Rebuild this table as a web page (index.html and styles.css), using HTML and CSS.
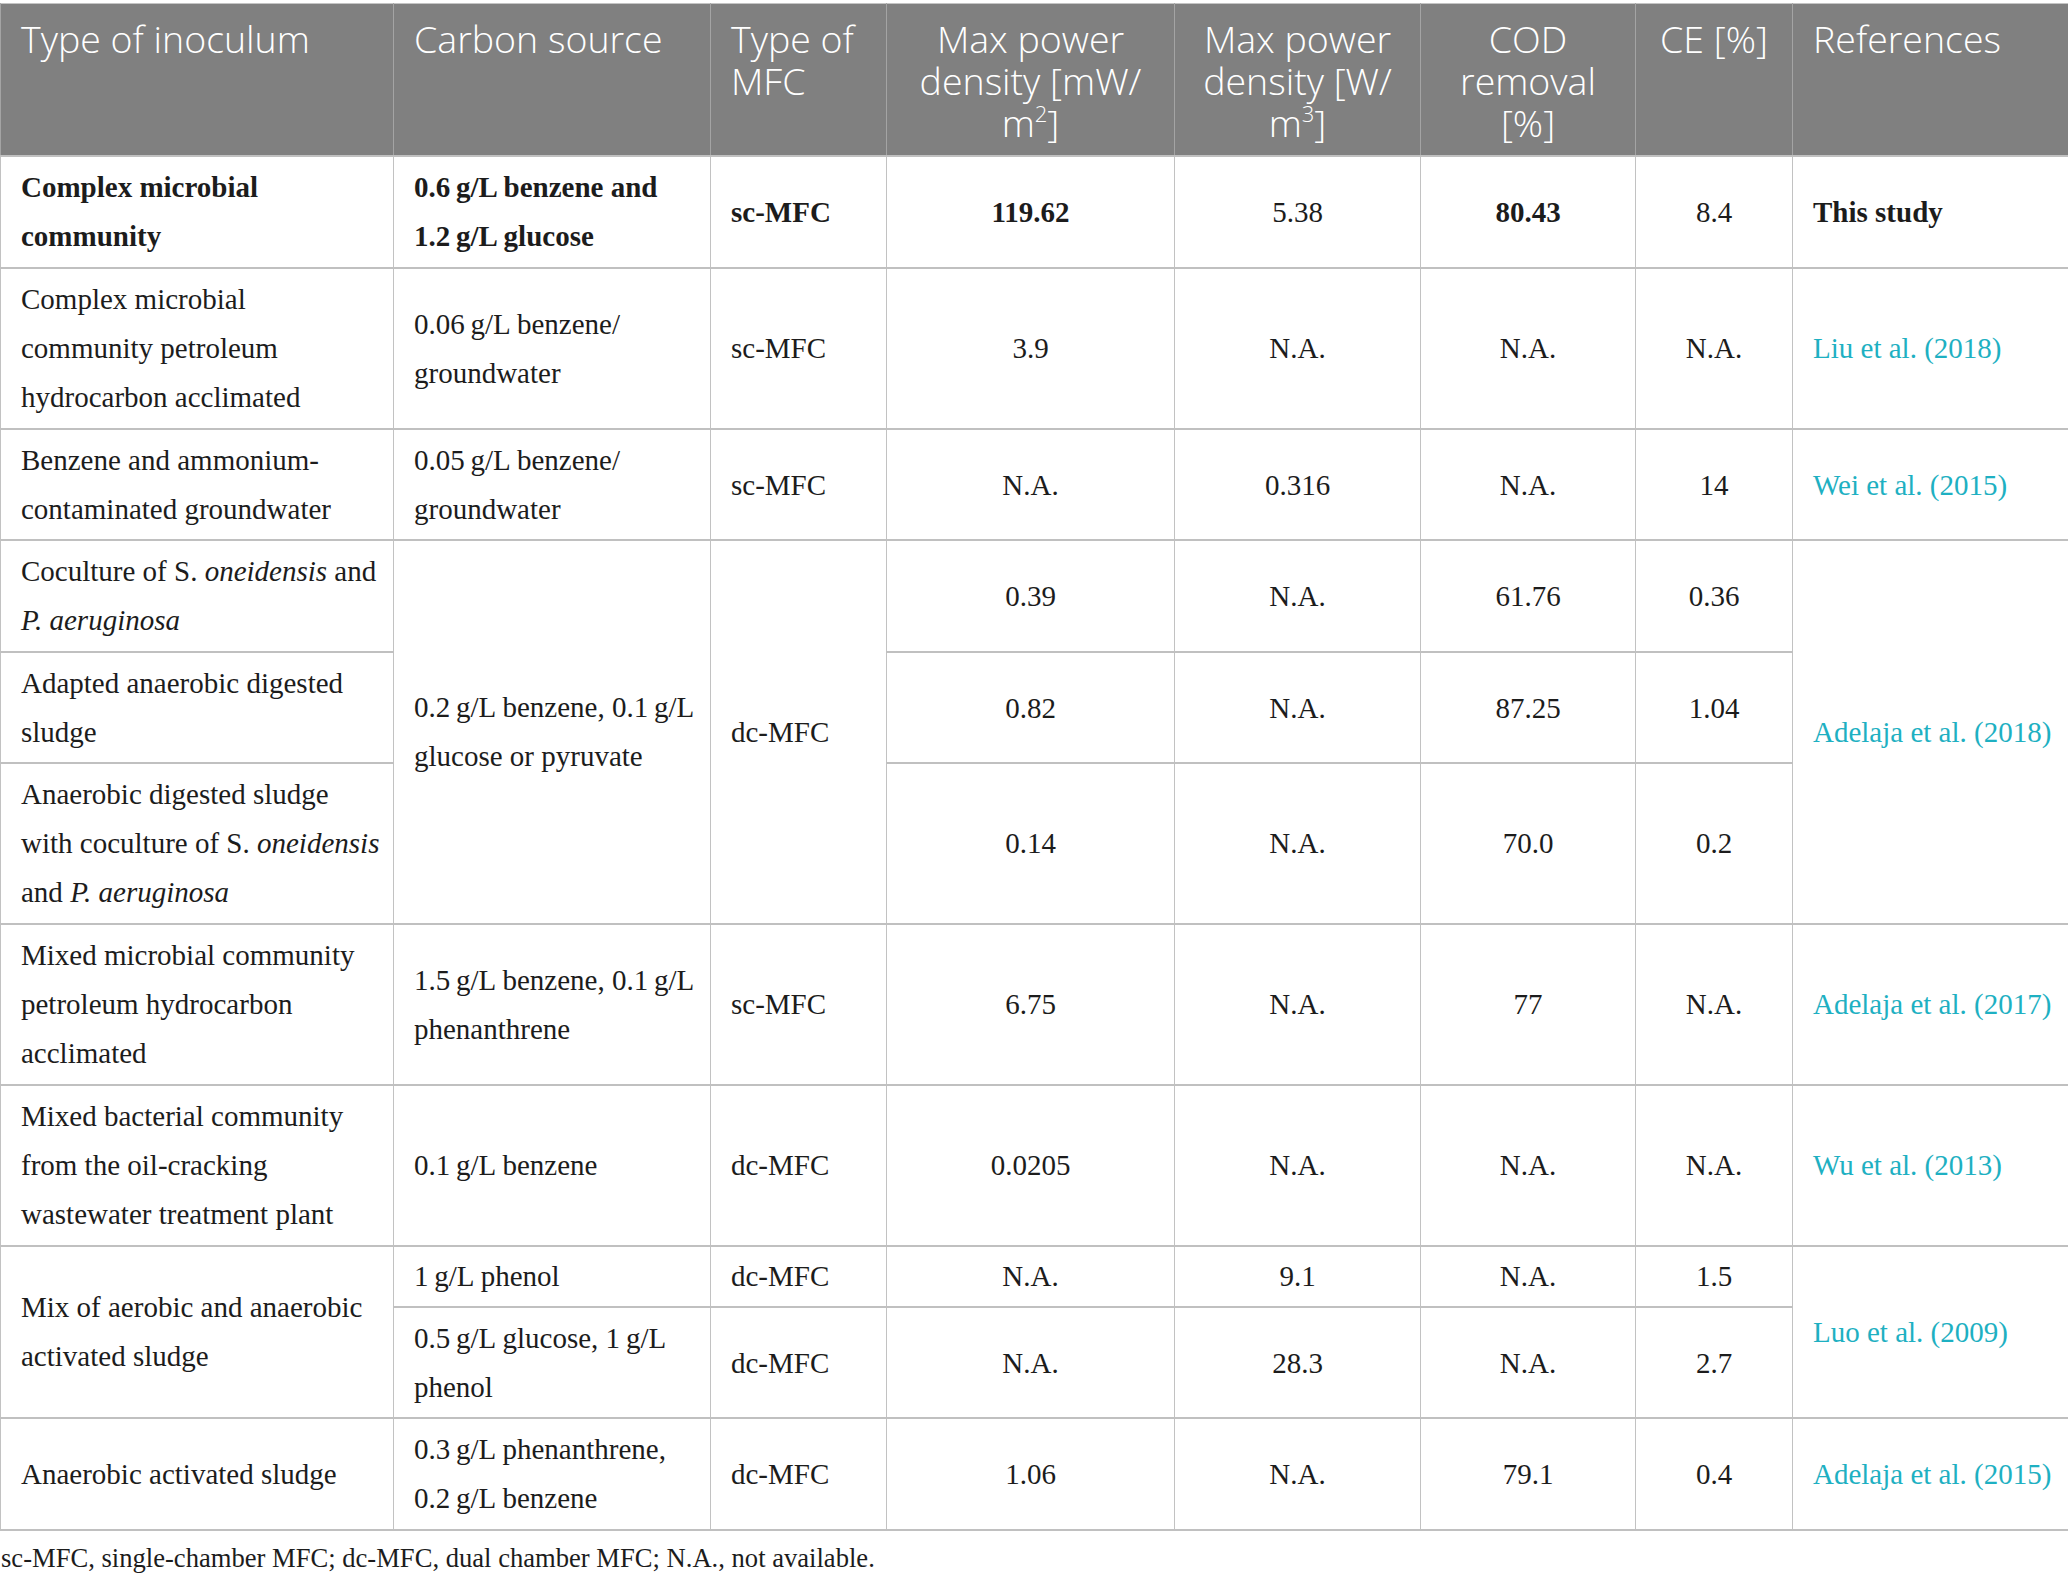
FILE: index.html
```html
<!DOCTYPE html>
<html lang="en">
<head>
  <meta charset="UTF-8" />
  <title>MFC performance comparison</title>
  <link rel="stylesheet" href="styles.css">
</head>
<body>

  <div class="page">
    <table class="mfc-table">
      <colgroup>
        <col class="col-inoc">
        <col class="col-carbon">
        <col class="col-type">
        <col class="col-pd2">
        <col class="col-pd3">
        <col class="col-cod">
        <col class="col-ce">
        <col class="col-ref">
      </colgroup>
      <thead>
        <tr>
          <th>Type of inoculum</th>
          <th>Carbon source</th>
          <th>Type of<br>MFC</th>
          <th class="mid">Max power<br>density [mW/<br>m<sup>2</sup>]</th>
          <th class="mid">Max power<br>density [W/<br>m<sup>3</sup>]</th>
          <th class="mid">COD<br>removal<br>[%]</th>
          <th class="mid">CE [%]</th>
          <th>References</th>
        </tr>
      </thead>
      <tbody>
        <tr>
          <td class="strong">Complex microbial<br>community</td>
          <td class="strong">0.6&thinsp;g/L benzene and<br>1.2&thinsp;g/L glucose</td>
          <td class="strong">sc-MFC</td>
          <td class="mid strong">119.62</td>
          <td class="mid">5.38</td>
          <td class="mid strong">80.43</td>
          <td class="mid">8.4</td>
          <td class="strong">This study</td>
        </tr>
        <tr>
          <td>Complex microbial<br>community petroleum<br>hydrocarbon acclimated</td>
          <td>0.06&thinsp;g/L benzene/<br>groundwater</td>
          <td>sc-MFC</td>
          <td class="mid">3.9</td>
          <td class="mid">N.A.</td>
          <td class="mid">N.A.</td>
          <td class="mid">N.A.</td>
          <td><a href="#">Liu et al. (2018)</a></td>
        </tr>
        <tr class="tight">
          <td>Benzene and ammonium-<br>contaminated groundwater</td>
          <td>0.05&thinsp;g/L benzene/<br>groundwater</td>
          <td>sc-MFC</td>
          <td class="mid">N.A.</td>
          <td class="mid">0.316</td>
          <td class="mid">N.A.</td>
          <td class="mid">14</td>
          <td><a href="#">Wei et al. (2015)</a></td>
        </tr>
        <tr>
          <td>Coculture of S. <i>oneidensis</i> and<br><i>P. aeruginosa</i></td>
          <td rowspan="3">0.2&thinsp;g/L benzene, 0.1&thinsp;g/L<br>glucose or pyruvate</td>
          <td rowspan="3">dc-MFC</td>
          <td class="mid">0.39</td>
          <td class="mid">N.A.</td>
          <td class="mid">61.76</td>
          <td class="mid">0.36</td>
          <td rowspan="3"><a href="#">Adelaja et al. (2018)</a></td>
        </tr>
        <tr class="tight">
          <td>Adapted anaerobic digested<br>sludge</td>
          <td class="mid">0.82</td>
          <td class="mid">N.A.</td>
          <td class="mid">87.25</td>
          <td class="mid">1.04</td>
        </tr>
        <tr>
          <td>Anaerobic digested sludge<br>with coculture of S. <i>oneidensis</i><br>and <i>P. aeruginosa</i></td>
          <td class="mid">0.14</td>
          <td class="mid">N.A.</td>
          <td class="mid">70.0</td>
          <td class="mid">0.2</td>
        </tr>
        <tr>
          <td>Mixed microbial community<br>petroleum hydrocarbon<br>acclimated</td>
          <td>1.5&thinsp;g/L benzene, 0.1&thinsp;g/L<br>phenanthrene</td>
          <td>sc-MFC</td>
          <td class="mid">6.75</td>
          <td class="mid">N.A.</td>
          <td class="mid">77</td>
          <td class="mid">N.A.</td>
          <td><a href="#">Adelaja et al. (2017)</a></td>
        </tr>
        <tr>
          <td>Mixed bacterial community<br>from the oil-cracking<br>wastewater treatment plant</td>
          <td>0.1&thinsp;g/L benzene</td>
          <td>dc-MFC</td>
          <td class="mid">0.0205</td>
          <td class="mid">N.A.</td>
          <td class="mid">N.A.</td>
          <td class="mid">N.A.</td>
          <td><a href="#">Wu et al. (2013)</a></td>
        </tr>
        <tr class="slim">
          <td rowspan="2">Mix of aerobic and anaerobic<br>activated sludge</td>
          <td>1&thinsp;g/L phenol</td>
          <td>dc-MFC</td>
          <td class="mid">N.A.</td>
          <td class="mid">9.1</td>
          <td class="mid">N.A.</td>
          <td class="mid">1.5</td>
          <td rowspan="2"><a href="#">Luo et al. (2009)</a></td>
        </tr>
        <tr class="tight">
          <td>0.5&thinsp;g/L glucose, 1&thinsp;g/L<br>phenol</td>
          <td>dc-MFC</td>
          <td class="mid">N.A.</td>
          <td class="mid">28.3</td>
          <td class="mid">N.A.</td>
          <td class="mid">2.7</td>
        </tr>
        <tr>
          <td>Anaerobic activated sludge</td>
          <td>0.3&thinsp;g/L phenanthrene,<br>0.2&thinsp;g/L benzene</td>
          <td>dc-MFC</td>
          <td class="mid">1.06</td>
          <td class="mid">N.A.</td>
          <td class="mid">79.1</td>
          <td class="mid">0.4</td>
          <td><a href="#">Adelaja et al. (2015)</a></td>
        </tr>
      </tbody>
    </table>

    <p class="note">sc-MFC, single-chamber MFC; dc-MFC, dual chamber MFC; N.A., not available.</p>
  </div>

</body>
</html>
```

FILE: styles.css
```css
body {
  margin: 0;
  background: #fff;
  font-family: "Liberation Serif", "Times New Roman", serif;
  color: #1c1c1c;
}

.page {
  padding-top: 3px;
}

.mfc-table {
  width: 2068px;
  border-collapse: collapse;
  table-layout: fixed;
  border: 1px solid #c4c4c4;
}

.col-inoc { width: 393px; }
.col-carbon { width: 317px; }
.col-type { width: 176px; }
.col-pd2 { width: 288px; }
.col-pd3 { width: 246px; }
.col-cod { width: 215px; }
.col-ce { width: 157px; }
.col-ref { width: 276px; }

.mfc-table th {
  background: #808080;
  color: #fff;
  font-family: "Open Sans", "Liberation Sans", sans-serif;
  font-weight: 300;
  font-size: 37.5px;
  line-height: 42px;
  text-align: left;
  vertical-align: top;
  padding: 14px 20px 11px 20px;
  border-left: 1px solid #a4a4a4;
  border-right: 1px solid #a4a4a4;
  border-bottom: 1px solid #a8a8a8;
  white-space: nowrap;
}

.mfc-table th sup {
  font-size: 22px;
  line-height: 0;
  vertical-align: 15px;
}

.mfc-table td {
  font-size: 29px;
  line-height: 49px;
  padding: 6px 20px;
  vertical-align: middle;
  text-align: left;
  border-left: 1px solid #c2c2c2;
  border-right: 1px solid #c2c2c2;
  border-top: 2px solid #c0c0c0;
  border-bottom: 2px solid #c0c0c0;
  white-space: nowrap;
}

.mfc-table .slim td {
  padding-top: 5px;
  padding-bottom: 5px;
}

.mfc-table .tight td {
  padding-bottom: 5px;
}

.mfc-table .mid {
  text-align: center;
}

.mfc-table .strong {
  font-weight: bold;
}

.mfc-table a {
  color: #1eb0c2;
  text-decoration: none;
}

.note {
  margin: 12px 0 0 1px;
  font-size: 26.6px;
  line-height: 30px;
  color: #1c1c1c;
}
```
